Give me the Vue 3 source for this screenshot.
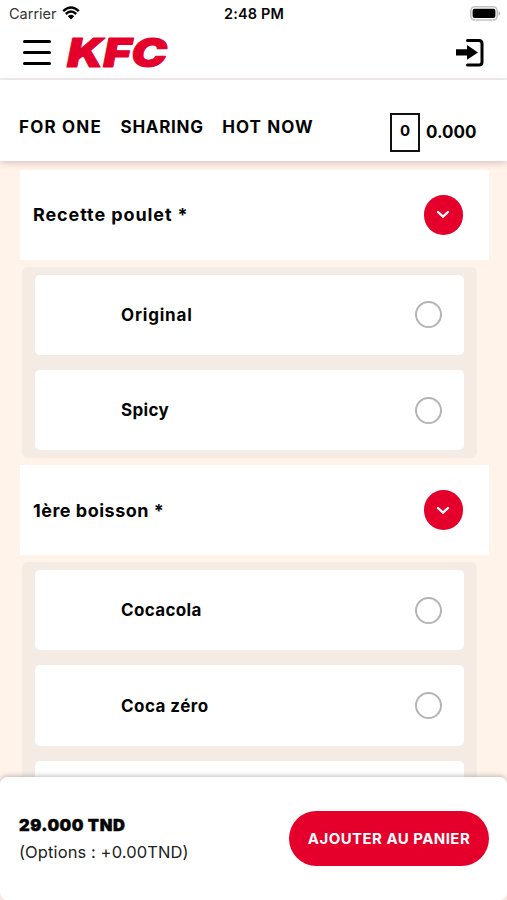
<template>
  <div class="screen">
    <div class="status-bar">
      <div class="carrier">
        <span>Carrier</span>
        <svg class="wifi" viewBox="0 0 18 14" aria-hidden="true">
          <path d="M1.2 5.1 Q9 -2 16.8 5.1" />
          <path d="M3.8 8 Q9 3.2 14.2 8" />
          <path class="dot" d="M5.8 10.2 Q9 7.4 12.2 10.2 L9 13.5 Z" />
        </svg>
      </div>
      <span class="clock">2:48 PM</span>
      <svg class="battery" viewBox="0 0 31 15" aria-hidden="true">
        <rect x="0.8" y="0.8" width="26.4" height="13.2" rx="4" fill="#fff" stroke="#c2c2c2" stroke-width="1.6" />
        <rect x="2.6" y="2.7" width="22.8" height="9.4" rx="2" fill="#000" />
        <path d="M28.5 5 Q32 7.4 28.5 9.8 Z" fill="#b5b5b5" />
      </svg>
    </div>

    <header class="top-bar">
      <button type="button" class="menu-btn" aria-label="Menu">
        <span></span>
        <span></span>
        <span></span>
      </button>
      <svg class="logo" viewBox="0 0 104 34" role="img" aria-label="KFC">
        <text x="1" y="31" textLength="100" lengthAdjust="spacingAndGlyphs">KFC</text>
      </svg>
      <button type="button" class="login-btn" aria-label="Connexion">
        <svg viewBox="0 0 28 28">
          <path d="M11.5 1.5 H23 Q26 1.5 26 4.5 V23 Q26 26 23 26 H11.5" fill="none" stroke="#000" stroke-width="3" stroke-linecap="round" />
          <path d="M0 10.3 H11 V6.1 L22 13.4 L11 20.7 V16.5 H0 Z" fill="#000" />
        </svg>
      </button>
    </header>

    <nav class="nav">
      <a v-for="lien in liens" :key="lien.nom" :class="['nav-link', lien.classe]">{{ lien.nom }}</a>
      <div class="cart">
        <span class="cart-count">{{ nbArticles }}</span>
        <span class="cart-total">0.000</span>
      </div>
    </nav>

    <main class="content">
      <section v-for="groupe in groupes" :key="groupe.titre">
        <div class="group-header">
          <h2 :class="groupe.classe">{{ groupe.titre }} *</h2>
          <button type="button" class="toggle" aria-label="Afficher">
            <svg viewBox="0 0 14 9"><path d="M2 2 L7 6.7 L12 2" /></svg>
          </button>
        </div>
        <div class="options">
          <label v-for="option in groupe.options" :key="option.nom" class="option">
            <span :class="['option-name', option.classe]">{{ option.nom }}</span>
            <input type="radio" :name="groupe.titre" :value="option.nom" v-model="choix[groupe.titre]" />
          </label>
        </div>
      </section>
    </main>

    <footer class="footer">
      <div>
        <div class="price">29.000 TND</div>
        <div class="extra">(Options : +0.00TND)</div>
      </div>
      <button type="button" class="add-btn">AJOUTER AU PANIER</button>
    </footer>
  </div>
</template>

<script setup>
import { ref, reactive } from 'vue';

const liens = [
  { nom: 'FOR ONE', classe: 'for-one' },
  { nom: 'SHARING', classe: 'sharing' },
  { nom: 'HOT NOW', classe: 'hot-now' }
];
const nbArticles = ref(0);
const choix = reactive({});

const groupes = [
  {
    titre: 'Recette poulet',
    classe: 'recette',
    options: [
      { nom: 'Original', classe: 'original' },
      { nom: 'Spicy', classe: 'spicy' }
    ]
  },
  {
    titre: '1ère boisson',
    classe: 'boisson',
    options: [
      { nom: 'Cocacola', classe: 'cola' },
      { nom: 'Coca zéro', classe: 'zero' },
      { nom: '', classe: '' }
    ]
  }
];
</script>

<style>
body {
  margin: 0;
  background: #fff3ea;
}
</style>

<style scoped>
.screen {
  display: flex;
  flex-direction: column;
  height: 900px;
  overflow: hidden;
  background: #fff3ea;
  font-family: Inter, "Liberation Sans", sans-serif;
  color: #050505;
}

button {
  border: none;
  padding: 0;
  background: none;
  font-family: inherit;
}

svg { display: block; }

.status-bar {
  display: grid;
  grid-template-columns: 1fr auto 1fr;
  align-items: center;
  height: 27px;
  flex-shrink: 0;
  padding: 0 6px 0 9px;
  background: #fff;
  font-size: 14.5px;
}

.carrier {
  display: flex;
  align-items: center;
  gap: 6px;
  color: #333;
}

.wifi {
  width: 18px;
  height: 14px;
  margin: -2px 0 0 -1px;
  fill: none;
  stroke: #000;
  stroke-width: 2.4;
}

.wifi .dot { fill: #000; stroke: none; }

.clock {
  margin-right: 2px;
  font-weight: 600;
  letter-spacing: 0.15px;
}

.battery { width: 31px; height: 15px; justify-self: end; }

.top-bar {
  display: flex;
  align-items: center;
  height: 51px;
  flex-shrink: 0;
  padding: 0 23px;
  background: #fff;
  border-bottom: 2px solid #f1f1f1;
}

.menu-btn {
  display: flex;
  flex-direction: column;
  gap: 8px;
  width: 28px;
}

.menu-btn span {
  height: 3px;
  border-radius: 2px;
  background: #000;
}

.logo {
  width: 104px;
  height: 34px;
  margin-left: 15px;
  overflow: visible;
}

.logo text {
  font-family: Inter, sans-serif;
  font-size: 40px;
  font-weight: 900;
  font-style: italic;
  fill: #e4002b;
  stroke: #e4002b;
  stroke-width: 1px;
  stroke-linejoin: round;
}

.login-btn { margin-left: auto; }
.login-btn svg { width: 28px; height: 28px; }

.nav {
  display: flex;
  align-items: center;
  gap: 18.5px;
  height: 81px;
  flex-shrink: 0;
  box-sizing: border-box;
  padding: 12px 30.5px 0 19px;
  background: #fff;
  box-shadow: 0 2px 7px rgba(90, 30, 40, 0.22);
  z-index: 1;
}

.nav-link {
  font-size: 17px;
  font-weight: 700;
  white-space: nowrap;
}

.for-one { letter-spacing: 1.2px; }
.sharing { letter-spacing: 0.7px; }
.hot-now { letter-spacing: 1.1px; }

.cart {
  display: flex;
  align-items: center;
  gap: 6px;
  margin: 11px 0 0 auto;
  font-weight: 700;
}

.cart-count {
  width: 30px;
  height: 39px;
  box-sizing: border-box;
  border: 2px solid #111;
  font-size: 15px;
  line-height: 32px;
  text-align: center;
}

.cart-total { font-size: 17px; }

.content {
  flex: 1;
  min-height: 0;
  padding: 8.5px 18.5px 0 20px;
  overflow: hidden;
}

.group-header {
  display: flex;
  align-items: center;
  justify-content: space-between;
  height: 90.7px;
  box-sizing: border-box;
  padding: 0 25.5px 0 13px;
  background: #fff;
}

h2 {
  margin: 0;
  font-size: 18px;
  font-weight: 700;
}

.recette { letter-spacing: 0.9px; }
.boisson { letter-spacing: 0.5px; }

.toggle {
  display: flex;
  align-items: center;
  justify-content: center;
  width: 39.5px;
  height: 39.5px;
  border-radius: 50%;
  background: #e4002b;
}

.toggle svg {
  width: 14px;
  height: 9px;
  fill: none;
  stroke: #fff;
  stroke-width: 2.4;
  stroke-linecap: round;
}

.options {
  display: flex;
  flex-direction: column;
  gap: 15px;
  margin: 6.5px 11.5px 6.6px 2px;
  padding: 8px 13px 7.7px 13px;
  border-radius: 6px;
  background: #f5ebe5;
}

.option {
  display: flex;
  align-items: center;
  justify-content: space-between;
  height: 80.4px;
  box-sizing: border-box;
  padding: 0 22px 0 86px;
  border-radius: 5px;
  background: #fff;
}

.option-name { font-size: 17px; font-weight: 700; }
.original { letter-spacing: 0.8px; }
.spicy { letter-spacing: 0.35px; }
.cola { letter-spacing: 0.35px; }
.zero { letter-spacing: 0.45px; }

input {
  appearance: none;
  width: 27px;
  height: 27px;
  box-sizing: border-box;
  margin: 0;
  border: 2px solid #b4b4b4;
  border-radius: 50%;
}

input:checked { border: 8px solid #e4002b; }

.footer {
  display: flex;
  align-items: center;
  justify-content: space-between;
  height: 123px;
  flex-shrink: 0;
  box-sizing: border-box;
  padding: 0 18px 0 19px;
  border-radius: 7px;
  background: #fff;
  box-shadow: 0 -1px 5px rgba(0, 0, 0, 0.25);
  z-index: 1;
}

.price {
  font-size: 16.5px;
  font-weight: 900;
  line-height: 27px;
  letter-spacing: 0.5px;
  -webkit-text-stroke: 0.4px #050505;
}

.extra {
  color: #222;
  font-size: 16.5px;
  line-height: 27px;
  letter-spacing: 0.1px;
}

.add-btn {
  width: 200px;
  height: 55px;
  border-radius: 28px;
  background: #e4002b;
  color: #fff;
  font-size: 15px;
  font-weight: 700;
  letter-spacing: 0.45px;
  white-space: nowrap;
}
</style>
